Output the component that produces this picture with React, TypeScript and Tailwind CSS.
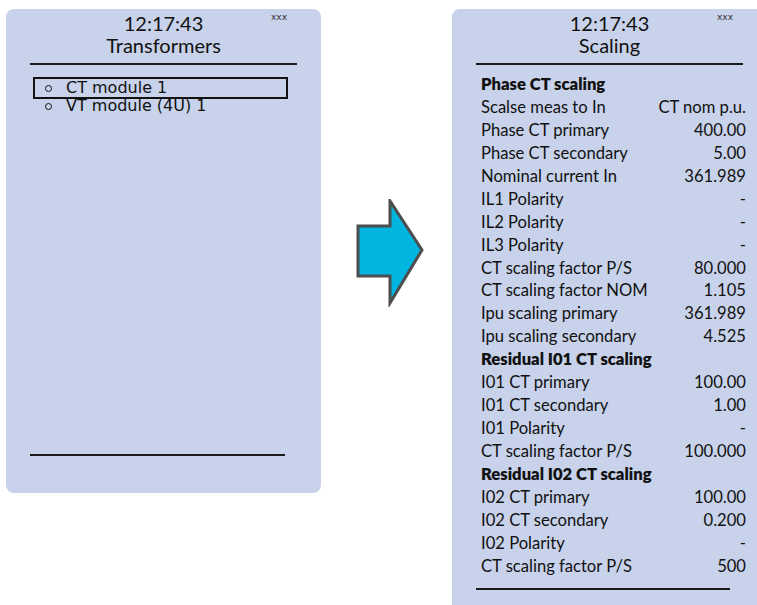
import React from "react";

const rows: { label: string; value?: string; bold?: boolean }[] = [
  { label: "Phase CT scaling", bold: true },
  { label: "Scalse meas to In", value: "CT nom p.u." },
  { label: "Phase CT primary", value: "400.00" },
  { label: "Phase CT secondary", value: "5.00" },
  { label: "Nominal current In", value: "361.989" },
  { label: "IL1 Polarity", value: "-" },
  { label: "IL2 Polarity", value: "-" },
  { label: "IL3 Polarity", value: "-" },
  { label: "CT scaling factor P/S", value: "80.000" },
  { label: "CT scaling factor NOM", value: "1.105" },
  { label: "Ipu scaling primary", value: "361.989" },
  { label: "Ipu scaling secondary", value: "4.525" },
  { label: "Residual I01 CT scaling", bold: true },
  { label: "I01 CT primary", value: "100.00" },
  { label: "I01 CT secondary", value: "1.00" },
  { label: "I01 Polarity", value: "-" },
  { label: "CT scaling factor P/S", value: "100.000" },
  { label: "Residual I02 CT scaling", bold: true },
  { label: "I02 CT primary", value: "100.00" },
  { label: "I02 CT secondary", value: "0.200" },
  { label: "I02 Polarity", value: "-" },
  { label: "CT scaling factor P/S", value: "500" },
];

function Header({ title }: { title: string }) {
  return (
    <div className="relative flex flex-col items-center pt-[3px] text-[20px] leading-[22px] text-[#111]">
      <span>12:17:43</span>
      <span>{title}</span>
      <span className="absolute right-[34px] top-[3px] text-[9px] leading-[10px] text-[#333]" style={{ fontFamily: "'DejaVu Sans', sans-serif" }}>
        xxx
      </span>
    </div>
  );
}

function Bullet() {
  return <span className="inline-block w-[7px] h-[7px] rounded-full border-[1.5px] border-[#111] mr-[14px]" />;
}

export default function App() {
  return (
    <div
      className="w-[757px] h-[605px] overflow-hidden bg-white flex items-start pt-[9px] pl-[6px]"
      style={{ fontFamily: "Lato, 'Open Sans', sans-serif" }}
    >
      {/* Left panel */}
      <div className="w-[315px] h-[484px] shrink-0 rounded-[8px] bg-[#c8d2ea] flex flex-col">
        <Header title="Transformers" />
        <div className="mx-[24px] mt-[7px] h-[2px] bg-[#1a1a1a]" />
        <div className="mt-[12px] ml-[27px] w-[255px] text-[16px] leading-[18px] text-[#111]" style={{ fontFamily: "'DejaVu Sans', sans-serif" }}>
          <div className="border-2 border-[#111] flex items-center pl-[10px]">
            <Bullet />
            <span>CT module 1</span>
          </div>
          <div className="-mt-[2px] flex items-center pl-[12px]">
            <Bullet />
            <span>VT module (4U) 1</span>
          </div>
        </div>
        <div className="flex-1" />
        <div className="ml-[24px] w-[255px] h-[2px] bg-[#1a1a1a] mb-[37px]" />
      </div>

      {/* Arrow */}
      <div className="w-[131px] shrink-0 flex justify-center pt-[190px]">
        <svg width="72" height="108" viewBox="0 0 72 108" className="ml-[8px]">
          <polygon
            points="3,27 35,27 35,2 67,51 35,104 35,77 3,77"
            fill="#00b6e0"
            stroke="#4d4d4d"
            strokeWidth="3"
            strokeLinejoin="miter"
          />
        </svg>
      </div>

      {/* Right panel */}
      <div className="w-[315px] h-[620px] shrink-0 rounded-[8px] bg-[#c8d2ea] flex flex-col">
        <Header title="Scaling" />
        <div className="mx-[24px] mt-[7px] h-[2px] bg-[#1a1a1a]" />
        <div className="mt-[8px] ml-[29px] w-[265px] text-[16.6px] text-[#111]">
          {rows.map((r, i) => (
            <div key={i} className="h-[22.95px] flex items-center justify-between whitespace-nowrap">
              <span className={r.bold ? "font-extrabold" : ""}>{r.label}</span>
              {r.value && <span>{r.value}</span>}
            </div>
          ))}
        </div>
        <div className="ml-[24px] mt-[10px] w-[254px] h-[2px] bg-[#1a1a1a]" />
      </div>
    </div>
  );
}
